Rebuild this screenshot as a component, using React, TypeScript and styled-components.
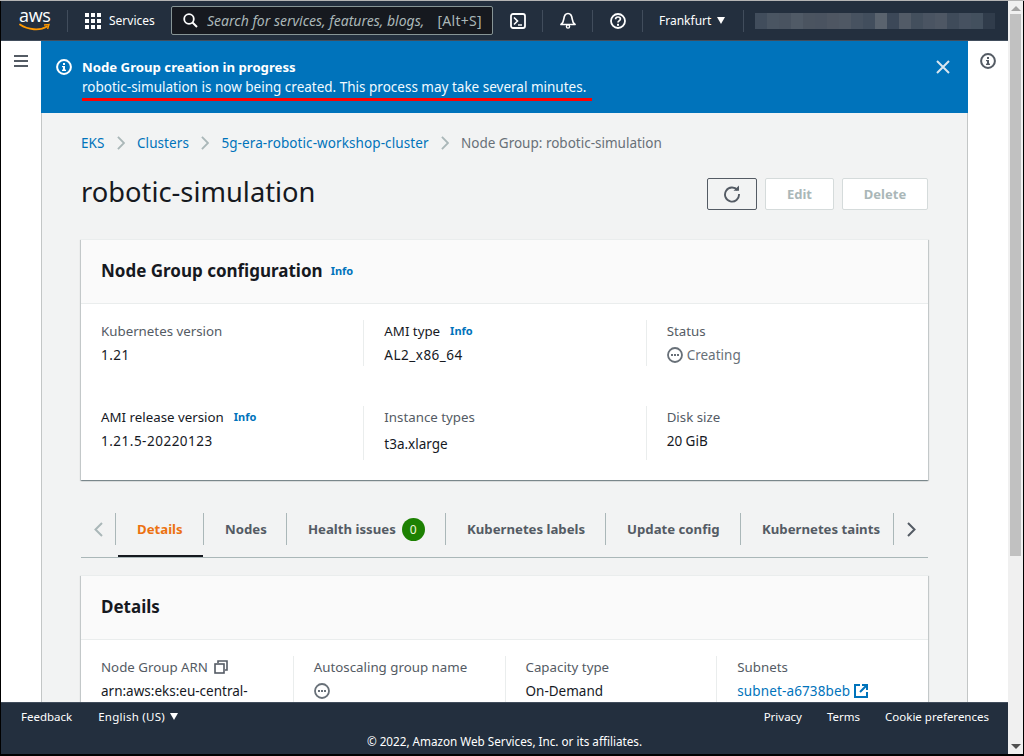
import styled, { createGlobalStyle } from 'styled-components';

const GlobalStyle = createGlobalStyle`
    html, body { margin: 0; padding: 0; height: 100%; overflow: hidden; }
    body { background: #000; font-family: "Noto Sans", "Open Sans", sans-serif; font-size: 13.5px; color: #16191f; }
    * { box-sizing: border-box; }
`;

const Frame = styled.div`
    height: 756px;
    padding: 1px 1px 2px 1px;
    display: flex;
    background: #000;
    box-shadow: inset 0 1px 0 #b5b5b5;
`;
const Page = styled.div`
    width: 1007px;
    display: flex;
    flex-direction: column;
    background: #fff;
`;
const Scrollbar = styled.div`
    width: 15px;
    background: #f0f0f0;
    display: flex;
    flex-direction: column;
    align-items: center;
    justify-content: space-between;
    padding: 5px 0 5px 0;
`;
const ScrollThumb = styled.div`
    width: 11px;
    height: 542px;
    background: #c1c1c1;
    margin-top: 3px;
    flex-shrink: 0;
`;
const Spacer = styled.div`
    flex: 1;
`;
const ScrollArrow = styled.div<{ $down?: boolean }>`
    width: 0;
    height: 0;
    border-left: 5px solid transparent;
    border-right: 5px solid transparent;
    ${(p) => (p.$down ? 'border-top: 5px solid #505050;' : 'border-bottom: 5px solid #a3a3a3;')}
`;

const TopNav = styled.header`
    height: 40px;
    flex-shrink: 0;
    background: #232f3e;
    display: flex;
    align-items: center;
    color: #fff;
    border-bottom: 1px solid #414d5c;
`;
const LogoBox = styled.div`
    width: 66px;
    height: 100%;
    position: relative;
    flex-shrink: 0;
    padding-left: 18px;
`;
const LogoText = styled.span`
    display: block;
    font-family: "Open Sans", sans-serif;
    font-size: 18px;
    line-height: 20px;
    margin-top: 4px;
    letter-spacing: -0.3px;
`;
const LogoSmile = styled.svg`
    position: absolute;
    left: 18px;
    top: 22px;
`;
const NavSep = styled.span`
    width: 1px;
    height: 22px;
    background: #414d5c;
    flex-shrink: 0;
`;
const ServicesBtn = styled.div`
    display: flex;
    align-items: center;
    gap: 8px;
    padding-left: 17px;
    width: 103px;
    font-size: 12px;
    flex-shrink: 0;
`;
const SearchBox = styled.div`
    width: 322px;
    height: 29px;
    background: #16191f;
    border: 1px solid #879596;
    border-radius: 2px;
    display: flex;
    align-items: center;
    padding: 0 10px 0 11px;
    flex-shrink: 0;
    color: #aab7b8;
    font-size: 14px;
`;
const SearchText = styled.span`
    font-style: italic;
    margin-left: 9px;
    flex: 1;
    white-space: nowrap;
`;
const SearchHint = styled.span`
    letter-spacing: 0.3px;
`;
const NavIcon = styled.div`
    width: 49px;
    display: flex;
    justify-content: center;
    flex-shrink: 0;
`;
const RegionBtn = styled.div`
    width: 100px;
    padding-left: 16px;
    display: flex;
    align-items: center;
    gap: 6px;
    font-size: 12px;
    flex-shrink: 0;
`;
const Caret = styled.span`
    width: 0;
    height: 0;
    border-left: 4.5px solid transparent;
    border-right: 4.5px solid transparent;
    border-top: 7px solid #fff;
`;
const Blurred = styled.div`
    display: flex;
    margin-left: 11px;
    height: 16px;
`;
const BlurCell = styled.span<{ $c: string }>`
    width: 12px;
    background: ${(p) => p.$c};
`;

const Body = styled.div`
    flex: 1;
    min-height: 0;
    display: flex;
    overflow: hidden;
`;
const SideRail = styled.aside`
    width: 40px;
    flex-shrink: 0;
    display: flex;
    justify-content: center;
    padding-top: 14px;
`;
const ToolsRail = styled(SideRail)`
    padding-top: 12px;
`;
const Center = styled.main`
    flex: 1;
    min-width: 0;
    display: flex;
    flex-direction: column;
    background: #f2f3f3;
`;
const Flash = styled.div`
    height: 72px;
    flex-shrink: 0;
    background: #0073bb;
    color: #fff;
    display: flex;
    padding: 16px 18px 0 15px;
    gap: 10px;
`;
const FlashIcon = styled.div`
    margin-top: 2px;
    height: 16px;
`;
const FlashText = styled.div`
    flex: 1;
`;
const FlashTitle = styled.div`
    font-weight: 700;
    font-size: 13.2px;
    line-height: 20px;
`;
const FlashBody = styled.div`
    line-height: 20px;
    font-size: 13.5px;
    color: #f1faff;
`;
const Underlined = styled.span`
    position: relative;
    &::after {
        content: '';
        position: absolute;
        left: 0;
        right: -6px;
        bottom: -5px;
        height: 3px;
        background: #f00;
    }
`;
const CloseIcon = styled.svg`
    margin-top: 3px;
`;
const Scroller = styled.div`
    flex: 1;
    min-height: 0;
    overflow: hidden;
    padding: 0 39px;
    border-left: 1px solid #c3c6c6;
    border-right: 1px solid #c3c6c6;
`;
const Breadcrumbs = styled.nav`
    display: flex;
    align-items: center;
    height: 60px;
    gap: 12px;
    color: #687078;
`;
const CrumbLink = styled.a`
    color: #0073bb;
    text-decoration: none;
    letter-spacing: 0.09px;
`;
const HeaderRow = styled.div`
    display: flex;
    align-items: center;
    justify-content: space-between;
    height: 38px;
    margin-bottom: 28px;
`;
const PageTitle = styled.h1`
    margin: -1px 0 0 0;
    font-size: 27.3px;
    font-weight: 400;
    line-height: 38px;
`;
const Actions = styled.div`
    display: flex;
    gap: 8px;
    margin-top: 4px;
`;
const Button = styled.button<{ $w: number; $disabled?: boolean }>`
    width: ${(p) => p.$w}px;
    height: 32px;
    border-radius: 2px;
    font: inherit;
    font-size: 13px;
    font-weight: 700;
    display: flex;
    align-items: center;
    justify-content: center;
    padding: 0;
    background: ${(p) => (p.$disabled ? '#fff' : 'transparent')};
    color: #aab7b8;
    border: 1px solid ${(p) => (p.$disabled ? '#d5dbdb' : '#545b64')};
`;
const Card = styled.section`
    background: #fff;
    border-top: 1px solid #eaeded;
    box-shadow: 0 1px 1px 0 rgba(0, 28, 36, 0.3), 1px 1px 1px 0 rgba(0, 28, 36, 0.15), -1px 1px 1px 0 rgba(0, 28, 36, 0.15);
`;
const CardHeader = styled.div`
    height: 64px;
    background: #fafafa;
    border-bottom: 1px solid #eaeded;
    display: flex;
    align-items: center;
    padding: 0 20px 2px 20px;
    gap: 8px;
`;
const CardTitle = styled.h2`
    margin: 0;
    font-size: 17px;
    font-weight: 700;
`;
const InfoLink = styled.a`
    color: #0073bb;
    font-size: 11px;
    font-weight: 700;
`;
const FieldGrid = styled.div<{ $cols: number }>`
    display: grid;
    grid-template-columns: repeat(${(p) => p.$cols}, 1fr);
    row-gap: 40px;
    padding: 16px 0 20px 0;
`;
const Field = styled.div<{ $divider?: boolean }>`
    padding-left: 20px;
    ${(p) => p.$divider && 'border-left: 1px solid #eaeded;'}
`;
const Label = styled.div<{ $dark?: boolean }>`
    line-height: 22px;
    font-size: 13.3px;
    color: ${(p) => (p.$dark ? '#16191f' : '#545b64')};
    display: flex;
    align-items: center;
    gap: 6px;
    white-space: nowrap;
`;
const LabelInfo = styled(InfoLink)`
    margin-left: 4px;
`;
const Value = styled.div<{ $low?: boolean; $muted?: boolean; $wide?: boolean }>`
    margin-top: 2px;
    min-height: 22px;
    line-height: 22px;
    display: flex;
    align-items: center;
    gap: 4px;
    white-space: nowrap;
    color: ${(p) => (p.$muted ? '#687078' : '#16191f')};
    ${(p) => p.$low && 'padding-top: 3px; padding-bottom: 5px;'}
    ${(p) => p.$wide && 'letter-spacing: 0.5px;'}
`;
const ValueLink = styled.a`
    color: #0073bb;
    letter-spacing: 0.13px;
`;
const TabBar = styled.div`
    display: flex;
    align-items: flex-start;
    height: 45px;
    margin-top: 33px;
    border-bottom: 1px solid #aab7b8;
    margin-bottom: 17px;
`;
const TabArrow = styled.div`
    width: 34px;
    height: 32px;
    display: flex;
    align-items: center;
    justify-content: center;
    flex-shrink: 0;
`;
const Tab = styled.div<{ $active?: boolean; $w: number }>`
    position: relative;
    width: ${(p) => p.$w}px;
    height: 32px;
    border-left: 1px solid #aab7b8;
    display: flex;
    align-items: center;
    padding-left: 21px;
    gap: 6px;
    font-weight: 700;
    font-size: 13.2px;
    white-space: nowrap;
    color: ${(p) => (p.$active ? '#ec7211' : '#545b64')};
    ${(p) =>
        p.$active &&
        `&::after {
            content: '';
            position: absolute;
            left: 2px;
            right: 0;
            top: 42px;
            height: 2px;
            background: #16191f;
        }`}
`;
const EndTab = styled.div`
    width: 1px;
    height: 32px;
    background: #aab7b8;
    flex-shrink: 0;
`;
const Badge = styled.span`
    width: 23px;
    height: 23px;
    border-radius: 50%;
    background: #1d8102;
    color: #f1f8d8;
    font-size: 12px;
    font-weight: 400;
    display: flex;
    align-items: center;
    justify-content: center;
`;
const Footer = styled.footer`
    height: 52px;
    flex-shrink: 0;
    background: #232f3e;
    border-top: 1px solid #414d5c;
    color: #fff;
    font-size: 11.5px;
    display: flex;
    flex-direction: column;
    align-items: center;
`;
const FooterRow = styled.div`
    width: 100%;
    display: flex;
    align-items: center;
    height: 27px;
    padding: 0 19px 0 20px;
`;
const FooterLinks = styled.div`
    margin-left: auto;
    display: flex;
    gap: 25px;
`;
const LangPicker = styled.div`
    display: flex;
    align-items: center;
    gap: 5px;
    margin-left: 26px;
    letter-spacing: 0.25px;
`;
const Copyright = styled.div`
    line-height: 22px;
    font-size: 11.7px;
`;

const blurColors = [
    '#414d5c', '#4a5562', '#495360', '#505a66', '#4b5460', '#4a5360', '#4e5662', '#4f5864', '#475260', '#424e5d',
    '#5a636e', '#3c4858', '#525b67', '#434f5d', '#4a5462', '#4e5764', '#3f4b5a', '#465160', '#43505e', '#303c4b',
];

const InfoCircle = ({ color, size }: { color: string; size: number }) => (
    <svg width={size} height={size} viewBox="0 0 16 16" fill="none">
        <circle cx="8" cy="8" r="6.9" stroke={color} strokeWidth="2" />
        <rect x="7" y="7" width="2" height="4.5" fill={color} />
        <rect x="6" y="10.6" width="4" height="1.4" fill={color} />
        <rect x="6" y="7" width="2" height="1.2" fill={color} />
        <rect x="7" y="4" width="2" height="2" fill={color} />
    </svg>
);

const DotsCircle = () => (
    <svg width="16" height="16" viewBox="0 0 16 16" fill="none">
        <circle cx="8" cy="8" r="7" stroke="#687078" strokeWidth="1.8" />
        <rect x="4" y="7" width="2" height="2" fill="#687078" />
        <rect x="7" y="7" width="2" height="2" fill="#687078" />
        <rect x="10" y="7" width="2" height="2" fill="#687078" />
    </svg>
);

const Chevron = ({ color, left, size = 14 }: { color: string; left?: boolean; size?: number }) => (
    <svg width={size * 0.6} height={size} viewBox="0 0 9 15" fill="none">
        <path d={left ? 'M8 1L1.5 7.5L8 14' : 'M1 1L7.5 7.5L1 14'} stroke={color} strokeWidth="2" />
    </svg>
);

const App = () => {
    return (
        <Frame>
            <GlobalStyle />
            <Page>
                <TopNav>
                    <LogoBox>
                        <LogoText>aws</LogoText>
                        <LogoSmile width="32" height="9" viewBox="0 0 32 9" fill="none">
                            <path d="M1 1.5C9 7 21 8 28 3.5" stroke="#f90" strokeWidth="1.8" strokeLinecap="round" />
                            <path d="M25 2L30 1.6L28.6 6" stroke="#f90" strokeWidth="1.4" />
                        </LogoSmile>
                    </LogoBox>
                    <NavSep />
                    <ServicesBtn>
                        <svg width="16" height="16" viewBox="0 0 16 16" fill="#fff">
                            {[0, 6, 12].map((y) =>
                                [0, 6, 12].map((x) => <rect key={`${x}-${y}`} x={x} y={y} width="4" height="4" />),
                            )}
                        </svg>
                        Services
                    </ServicesBtn>
                    <SearchBox>
                        <svg width="15" height="15" viewBox="0 0 15 15" fill="none">
                            <circle cx="6" cy="6" r="4.8" stroke="#fff" strokeWidth="1.8" />
                            <path d="M9.5 9.5L14 14" stroke="#fff" strokeWidth="2" />
                        </svg>
                        <SearchText>Search for services, features, blogs,</SearchText>
                        <SearchHint>[Alt+S]</SearchHint>
                    </SearchBox>
                    <NavIcon>
                        <svg width="16" height="16" viewBox="0 0 16 16" fill="none">
                            <rect x="1" y="1" width="14" height="14" rx="2" stroke="#fff" strokeWidth="1.8" />
                            <path d="M4 4.5L7.5 8L4 11.5" stroke="#fff" strokeWidth="1.6" />
                            <path d="M8 12H12" stroke="#fff" strokeWidth="1.4" />
                        </svg>
                    </NavIcon>
                    <NavSep />
                    <NavIcon>
                        <svg width="16" height="17" viewBox="0 0 16 17" fill="none">
                            <path
                                d="M1 12.5C3 11 3.5 9.5 3.8 7C4.2 3.5 5.8 1.5 8 1.5C10.2 1.5 11.8 3.5 12.2 7C12.5 9.5 13 11 15 12.5Z"
                                stroke="#fff"
                                strokeWidth="1.7"
                                strokeLinejoin="round"
                            />
                            <circle cx="8" cy="14.5" r="1.6" stroke="#fff" strokeWidth="1.4" />
                        </svg>
                    </NavIcon>
                    <NavSep />
                    <NavIcon>
                        <svg width="16" height="16" viewBox="0 0 16 16" fill="none">
                            <circle cx="8" cy="8" r="7" stroke="#fff" strokeWidth="1.8" />
                            <path
                                d="M5.6 6.2C5.6 4.8 6.7 4 8 4C9.4 4 10.4 4.9 10.4 6C10.4 7.6 8 7.6 8 9.6"
                                stroke="#fff"
                                strokeWidth="1.7"
                            />
                            <rect x="7" y="10.8" width="2" height="2" fill="#fff" />
                        </svg>
                    </NavIcon>
                    <NavSep />
                    <RegionBtn>
                        Frankfurt <Caret />
                    </RegionBtn>
                    <NavSep />
                    <Blurred>
                        {blurColors.map((c, i) => (
                            <BlurCell key={i} $c={c} />
                        ))}
                    </Blurred>
                </TopNav>
                <Body>
                    <SideRail>
                        <svg width="14" height="12" viewBox="0 0 14 12" fill="#545b64">
                            <rect y="0" width="14" height="2" />
                            <rect y="5" width="14" height="2" />
                            <rect y="10" width="14" height="2" />
                        </svg>
                    </SideRail>
                    <Center>
                        <Flash>
                            <FlashIcon>
                                <InfoCircle color="#fff" size={16} />
                            </FlashIcon>
                            <FlashText>
                                <FlashTitle>Node Group creation in progress</FlashTitle>
                                <FlashBody>
                                    <Underlined>
                                        robotic-simulation is now being created. This process may take several minutes.
                                    </Underlined>
                                </FlashBody>
                            </FlashText>
                            <CloseIcon width="14" height="14" viewBox="0 0 14 14" fill="none">
                                <path d="M1 1L13 13M13 1L1 13" stroke="#d8e6ef" strokeWidth="2" />
                            </CloseIcon>
                        </Flash>
                        <Scroller>
                            <Breadcrumbs>
                                <CrumbLink>EKS</CrumbLink>
                                <Chevron color="#aab7b8" />
                                <CrumbLink>Clusters</CrumbLink>
                                <Chevron color="#aab7b8" />
                                <CrumbLink>5g-era-robotic-workshop-cluster</CrumbLink>
                                <Chevron color="#aab7b8" />
                                <span>Node Group: robotic-simulation</span>
                            </Breadcrumbs>
                            <HeaderRow>
                                <PageTitle>robotic-simulation</PageTitle>
                                <Actions>
                                    <Button $w={50}>
                                        <svg width="18" height="18" viewBox="0 0 18 18" fill="none">
                                            <path
                                                d="M14.5 5.2A7 7 0 1 0 16 9"
                                                stroke="#545b64"
                                                strokeWidth="1.9"
                                            />
                                            <path d="M10.5 5.8H16V0.6Z" fill="#545b64" />
                                        </svg>
                                    </Button>
                                    <Button $w={69} $disabled>
                                        Edit
                                    </Button>
                                    <Button $w={86} $disabled>
                                        Delete
                                    </Button>
                                </Actions>
                            </HeaderRow>
                            <Card>
                                <CardHeader>
                                    <CardTitle>Node Group configuration</CardTitle>
                                    <InfoLink>Info</InfoLink>
                                </CardHeader>
                                <FieldGrid $cols={3}>
                                    <Field>
                                        <Label>Kubernetes version</Label>
                                        <Value $wide>1.21</Value>
                                    </Field>
                                    <Field $divider>
                                        <Label $dark>
                                            AMI type <LabelInfo>Info</LabelInfo>
                                        </Label>
                                        <Value $wide>AL2_x86_64</Value>
                                    </Field>
                                    <Field $divider>
                                        <Label>Status</Label>
                                        <Value $muted>
                                            <DotsCircle />
                                            Creating
                                        </Value>
                                    </Field>
                                    <Field>
                                        <Label $dark>
                                            AMI release version <LabelInfo>Info</LabelInfo>
                                        </Label>
                                        <Value $wide>1.21.5-20220123</Value>
                                    </Field>
                                    <Field $divider>
                                        <Label>Instance types</Label>
                                        <Value $low>t3a.xlarge</Value>
                                    </Field>
                                    <Field $divider>
                                        <Label>Disk size</Label>
                                        <Value>20 GiB</Value>
                                    </Field>
                                </FieldGrid>
                            </Card>
                            <TabBar>
                                <TabArrow>
                                    <Chevron color="#aab7b8" left size={15} />
                                </TabArrow>
                                <Tab $w={88} $active>
                                    Details
                                </Tab>
                                <Tab $w={83}>Nodes</Tab>
                                <Tab $w={159}>
                                    Health issues <Badge>0</Badge>
                                </Tab>
                                <Tab $w={160}>Kubernetes labels</Tab>
                                <Tab $w={135}>Update config</Tab>
                                <Tab $w={153}>Kubernetes taints</Tab>
                                <EndTab />
                                <TabArrow>
                                    <Chevron color="#545b64" size={15} />
                                </TabArrow>
                            </TabBar>
                            <Card>
                                <CardHeader>
                                    <CardTitle>Details</CardTitle>
                                </CardHeader>
                                <FieldGrid $cols={4}>
                                    <Field>
                                        <Label>
                                            Node Group ARN
                                            <svg width="14" height="14" viewBox="0 0 14 14" fill="none">
                                                <rect x="1" y="4" width="9" height="9" stroke="#545b64" strokeWidth="1.6" />
                                                <path d="M4 3V1H13V10H11" stroke="#545b64" strokeWidth="1.6" />
                                            </svg>
                                        </Label>
                                        <Value>arn:aws:eks:eu-central-</Value>
                                    </Field>
                                    <Field $divider>
                                        <Label>Autoscaling group name</Label>
                                        <Value>
                                            <DotsCircle />
                                        </Value>
                                    </Field>
                                    <Field $divider>
                                        <Label>Capacity type</Label>
                                        <Value>On-Demand</Value>
                                    </Field>
                                    <Field $divider>
                                        <Label>Subnets</Label>
                                        <Value>
                                            <ValueLink>subnet-a6738beb</ValueLink>
                                            <svg width="14" height="14" viewBox="0 0 14 14" fill="none">
                                                <path d="M6 1H1V13H13V8" stroke="#0073bb" strokeWidth="2" />
                                                <path d="M8 1H13V6M13 1L6 8" stroke="#0073bb" strokeWidth="2" />
                                            </svg>
                                        </Value>
                                    </Field>
                                </FieldGrid>
                            </Card>
                        </Scroller>
                    </Center>
                    <ToolsRail>
                        <InfoCircle color="#545b64" size={16} />
                    </ToolsRail>
                </Body>
                <Footer>
                    <FooterRow>
                        Feedback
                        <LangPicker>
                            English (US) <Caret />
                        </LangPicker>
                        <FooterLinks>
                            <span>Privacy</span>
                            <span>Terms</span>
                            <span>Cookie preferences</span>
                        </FooterLinks>
                    </FooterRow>
                    <Copyright>© 2022, Amazon Web Services, Inc. or its affiliates.</Copyright>
                </Footer>
            </Page>
            <Scrollbar>
                <ScrollArrow />
                <ScrollThumb />
                <Spacer />
                <ScrollArrow $down />
            </Scrollbar>
        </Frame>
    );
};
export default App;
